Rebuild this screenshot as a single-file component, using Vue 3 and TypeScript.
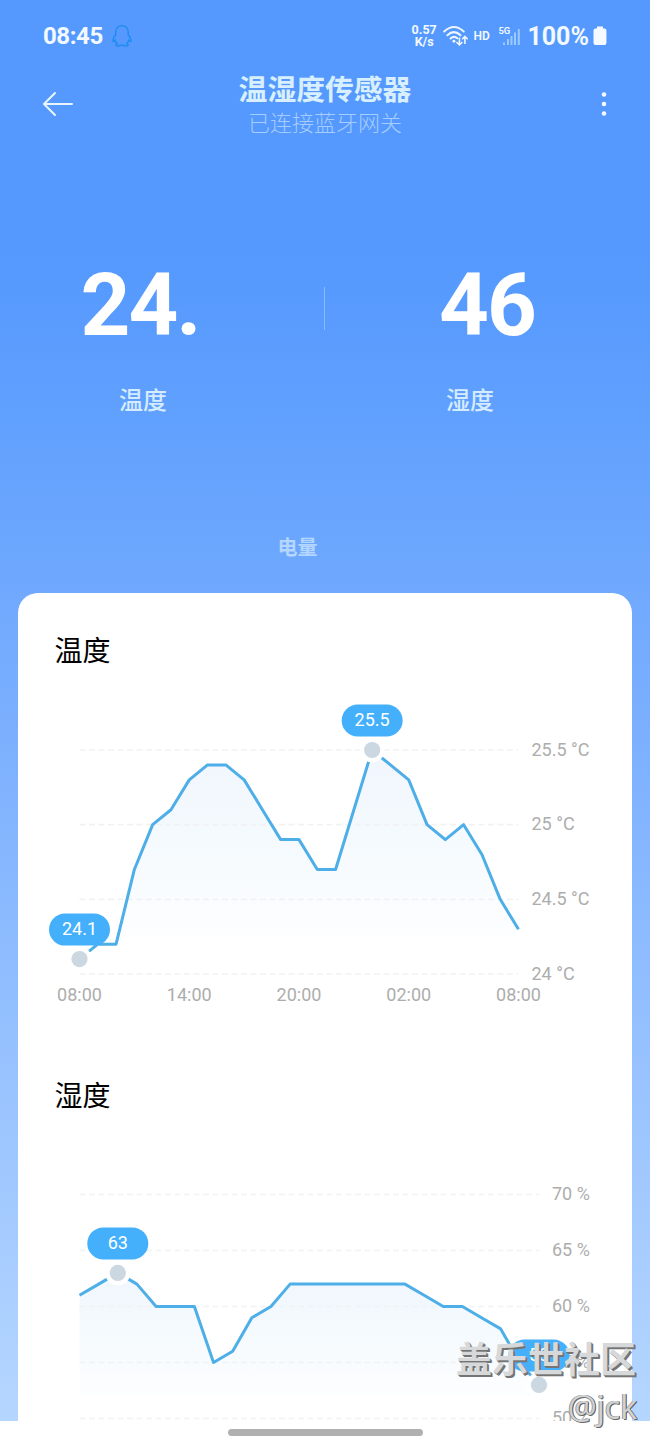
<script setup lang="ts">
interface Chart {
  id: string
  title: string
  left: number
  right: number
  top: number
  bottom: number
  max: number
  min: number
  ticks: { value: number; label: string }[]
  labelX: number
  times: string[]
  fadeEnd: number
  marks: number[]
  values: number[]
}

const charts: Chart[] = [
  {
    id: 'temperature',
    title: '温度',
    left: 61.5,
    right: 500.5,
    top: 75,
    bottom: 299,
    max: 25.5,
    min: 24,
    ticks: [
      { value: 25.5, label: '25.5 °C' },
      { value: 25, label: '25 °C' },
      { value: 24.5, label: '24.5 °C' },
      { value: 24, label: '24 °C' },
    ],
    labelX: 513.5,
    times: ['08:00', '14:00', '20:00', '02:00', '08:00'],
    fadeEnd: 262,
    marks: [0, 16],
    values: [
      24.1, 24.2, 24.2, 24.7, 25, 25.1, 25.3, 25.4, 25.4, 25.3, 25.1, 24.9, 24.9,
      24.7, 24.7, 25.1, 25.5, 25.4, 25.3, 25, 24.9, 25, 24.8, 24.5, 24.3,
    ],
  },
  {
    id: 'humidity',
    title: '湿度',
    left: 61.5,
    right: 521,
    top: 74.5,
    bottom: 298.5,
    max: 70,
    min: 50,
    ticks: [
      { value: 70, label: '70 %' },
      { value: 65, label: '65 %' },
      { value: 60, label: '60 %' },
      { value: 55, label: '55 %' },
      { value: 50, label: '50 %' },
    ],
    labelX: 534,
    times: [],
    fadeEnd: 276,
    marks: [2, 24],
    values: [
      61, 62, 63, 62, 60, 60, 60, 55, 56, 59, 60, 62, 62, 62, 62, 62, 62, 62, 61,
      60, 60, 59, 58, 55, 53,
    ],
  },
]

const px = (c: Chart, i: number) => c.left + ((c.right - c.left) * i) / (c.values.length - 1)
const py = (c: Chart, v: number) => c.top + ((c.max - v) / (c.max - c.min)) * (c.bottom - c.top)
const line = (c: Chart) =>
  c.values.map((v, i) => `${px(c, i).toFixed(2)},${py(c, v).toFixed(2)}`).join(' ')
const area = (c: Chart) => `${c.left},${c.fadeEnd} ${line(c)} ${c.right},${c.fadeEnd}`
const highest = (c: Chart) => py(c, Math.max(...c.values))
</script>

<template>
  <div class="screen">
    <div class="status">
      <span class="clock">08:45</span>
      <svg class="penguin" width="22" height="24" viewBox="0 0 22 24">
        <path
          d="M11 1.7C7 1.7 4.7 4.5 4.7 8v2.8C3.2 12.800 1.500 15 1.900 17.200c.4.8 1.400.2 2.300-1 .3 1.500.9 2.600 1.900 3.500-1.100.3-1.500 1-1.200 1.700.8 1 4.300.7 6.100-.4 1.800 1.100 5.300 1.400 6.100.4.3-.7-.1-1.400-1.200-1.700 1-.9 1.600-2 1.900-3.500.9 1.200 1.900 1.800 2.300 1 .4-2.200-1.300-4.400-2.800-6.400V8c0-3.500-2.300-6.300-6.300-6.300z"
        />
      </svg>
      <div class="speed"><span>0.57</span><span>K/s</span></div>
      <svg class="wifi" width="26" height="22" viewBox="0 0 26 22">
        <g fill="none" stroke="#eef7ff" stroke-width="2" stroke-linecap="round">
          <path d="M1.200 6.500Q11 -2.500 20.800 6.500" />
          <path d="M4.400 10.200Q11 4 17.600 10.200" />
          <path d="M7.600 13.500Q11 10.300 14.400 13.300" />
        </g>
        <circle cx="11" cy="16.300" r="1.500" fill="#eef7ff" />
        <path
          d="M16.500 12.500v7.500m-3-3l3 3 3-3M22 19v-7.500M19.200 14.300L22 11.500l2.800 2.800"
          fill="none"
          stroke="#eef7ff"
          stroke-width="1.600"
        />
      </svg>
      <span class="hd">HD</span>
      <div class="cell">
        <span class="gen">5G</span>
        <svg width="18" height="18" viewBox="0 0 18 18">
          <g fill="#9bcaff">
            <rect x="0" y="14.500" width="2" height="2.500" />
            <rect x="4" y="11" width="2" height="6" />
            <rect x="7.500" y="8" width="2" height="9" />
            <rect x="11" y="4.500" width="2" height="12.500" />
            <rect x="14.800" y="1" width="2" height="16" />
          </g>
        </svg>
      </div>
      <span class="percent">100%</span>
      <svg class="battery" width="14" height="20" viewBox="0 0 14 20">
        <path
          d="M4 .5h6v2h1.500a2 2 0 0 1 2 2v12.500a2 2 0 0 1-2 2h-9a2 2 0 0 1-2-2V4.500a2 2 0 0 1 2-2H4z"
          fill="#f4faff"
        />
      </svg>
    </div>

    <header class="header">
      <svg class="back" width="32" height="28" viewBox="0 0 32 28">
        <path d="M30 14H2M13 3L2 14l11 11" />
      </svg>
      <div class="heading">
        <h1>温湿度传感器</h1>
        <p>已连接蓝牙网关</p>
      </div>
      <svg class="more" width="8" height="28" viewBox="0 0 8 28">
        <circle cx="4" cy="4.500" r="2.300" />
        <circle cx="4" cy="14" r="2.300" />
        <circle cx="4" cy="23.500" r="2.300" />
      </svg>
    </header>

    <section class="metrics">
      <div class="metric first">
        <strong>24.</strong>
        <span>温度</span>
      </div>
      <i class="divider"></i>
      <div class="metric second">
        <strong>46</strong>
        <span>湿度</span>
      </div>
    </section>
    <div class="power">电量</div>

    <main class="card">
      <section v-for="c in charts" :key="c.id" class="panel">
        <h2>{{ c.title }}</h2>
        <svg class="chart" width="614" height="340" viewBox="0 0 614 340">
          <defs>
            <linearGradient
              :id="c.id"
              gradientUnits="userSpaceOnUse"
              x1="0"
              x2="0"
              :y1="highest(c)"
              :y2="c.fadeEnd"
            >
              <stop offset="0" stop-color="#f0f6fd" />
              <stop offset="0.500" stop-color="#f5fafe" />
              <stop offset="1" stop-color="#fdfeff" />
            </linearGradient>
          </defs>
          <polygon :points="area(c)" :fill="`url(#${c.id})`" />
          <g v-for="t in c.ticks" :key="t.label">
            <line class="grid" :x1="c.left" :x2="c.right" :y1="py(c, t.value)" :y2="py(c, t.value)" />
            <text class="axis" :x="c.labelX" :y="py(c, t.value) + 5.500">{{ t.label }}</text>
          </g>
          <polyline class="line" :points="line(c)" />
          <g v-for="m in c.marks" :key="m">
            <circle :cx="px(c, m)" :cy="py(c, c.values[m])" r="12.500" fill="#fff" />
            <circle :cx="px(c, m)" :cy="py(c, c.values[m])" r="8.100" fill="#cbd7e1" />
            <rect
              class="bubble"
              :x="px(c, m) - 30.500"
              :y="py(c, c.values[m]) - 45.500"
              width="61"
              height="32"
              rx="16"
            />
            <text class="value" :x="px(c, m)" :y="py(c, c.values[m]) - 24">
              {{ c.values[m] }}
            </text>
          </g>
          <text
            v-for="(t, i) in c.times"
            :key="i"
            class="axis time"
            :x="c.left + ((c.right - c.left) * i) / 4"
            y="326"
          >
            {{ t }}
          </text>
        </svg>
      </section>
    </main>

    <footer class="nav"><i></i></footer>

    <div class="watermark">
      <span class="community">盖乐世社区</span>
      <span class="author">@jck</span>
    </div>
  </div>
</template>

<style>
body {
  margin: 0;
}
</style>

<style scoped>
.screen {
  position: relative;
  width: 650px;
  height: 1444px;
  overflow: hidden;
  display: flex;
  flex-direction: column;
  font-family: Roboto, 'Noto Sans CJK SC', sans-serif;
  background: linear-gradient(
    #5599fe 0,
    #5599fe 255px,
    #5f9ffe 400px,
    #6ca7fe 550px,
    #79aefe 700px,
    #b5d6ff 1421px
  );
}
.status {
  display: flex;
  align-items: center;
  height: 72px;
  padding: 0 43px;
  box-sizing: border-box;
  color: #f2f9ff;
}
.clock {
  width: 60px;
  font-size: 24px;
  font-weight: 700;
  letter-spacing: -0.4px;
  white-space: nowrap;
}
.penguin {
  margin-left: 8px;
}
.penguin path {
  fill: none;
  stroke: #218cf0;
  stroke-width: 1.5;
}
.speed {
  display: flex;
  flex-direction: column;
  align-items: center;
  width: 27px;
  margin-left: 278px;
  font-size: 12.5px;
  font-weight: 700;
  line-height: 12px;
}
.wifi {
  margin-left: 5px;
}
.hd {
  width: 17px;
  margin-left: 5px;
  font-size: 12px;
  font-weight: 600;
}
.cell {
  display: flex;
  align-items: flex-end;
  height: 20px;
  width: 23px;
  margin-left: 8px;
}
.gen {
  align-self: flex-start;
  width: 12px;
  margin-right: -7px;
  font-size: 9.5px;
  line-height: 10px;
  font-weight: 600;
}
.cell svg {
  flex: none;
}
.percent {
  width: 62px;
  margin-left: 6px;
  font-size: 25px;
  font-weight: 700;
  white-space: nowrap;
}
.battery {
  margin-left: 4px;
}
.header {
  display: flex;
  align-items: center;
  justify-content: space-between;
  height: 64px;
  padding: 0 42px;
}
.back path {
  fill: none;
  stroke: #eaf6ff;
  stroke-width: 2;
  stroke-linecap: round;
}
.more {
  fill: #f2f9ff;
}
.heading {
  text-align: center;
  margin-left: -24px;
  padding-top: 4px;
}
h1,
h2,
p {
  margin: 0;
}
h1 {
  font-size: 28.8px;
  line-height: 36px;
  font-weight: 700;
  color: #d8efff;
}
p {
  font-size: 22px;
  line-height: 32px;
  font-weight: 300;
  color: #a5cdff;
}
.metrics {
  display: flex;
  align-items: flex-start;
  height: 398px;
  padding-top: 113px;
  box-sizing: border-box;
}
.metric {
  display: flex;
  flex-direction: column;
  align-items: center;
}
.metric strong {
  font-size: 87px;
  line-height: 112px;
  font-weight: 700;
  color: #fff;
  letter-spacing: -2px;
}
.metric span {
  margin-top: 23px;
  font-size: 24px;
  line-height: 34px;
  font-weight: 500;
  color: #d5ebff;
}
.metric.first {
  padding-right: 38px;
  width: 286px;
}
.metric.first strong {
  margin-left: -6px;
}
.metric.second {
  width: 290px;
}
.metric.second strong {
  margin-left: 34px;
}
.divider {
  width: 1px;
  height: 43px;
  margin-top: 38px;
  background: #86bbff;
}
.power {
  width: 595px;
  height: 59px;
  text-align: center;
  font-size: 20px;
  line-height: 28px;
  font-weight: 700;
  color: #b5d6ff;
}
.card {
  margin: 0 18px;
  height: 828px;
  overflow: hidden;
  background: #fff;
  border-radius: 20px 20px 0 0;
}
.panel {
  height: 444.5px;
  overflow: hidden;
}
h2 {
  height: 43px;
  padding: 39px 36.5px 0;
  font-size: 28px;
  line-height: 40px;
  font-weight: 400;
  color: #000;
}
.chart {
  display: block;
}
.grid {
  stroke: #f1f2f3;
  stroke-width: 1.6;
  stroke-dasharray: 6 3.5;
}
.axis {
  fill: #adadad;
  font-size: 18px;
}
.time {
  text-anchor: middle;
}
.line {
  fill: none;
  stroke: #4eaee7;
  stroke-width: 3;
  stroke-linejoin: round;
}
.bubble {
  fill: #44b0fc;
}
.value {
  fill: #fff;
  font-size: 18px;
  text-anchor: middle;
}
.nav {
  display: flex;
  justify-content: center;
  height: 23px;
  padding-top: 8px;
  box-sizing: border-box;
  background: #fff;
}
.nav i {
  width: 195px;
  height: 7px;
  border-radius: 4px;
  background: #b0b0b0;
}
.watermark {
  position: absolute;
  right: 13px;
  top: 1336px;
  display: flex;
  flex-direction: column;
  align-items: flex-end;
  white-space: nowrap;
}
.community {
  font-size: 36px;
  line-height: 50px;
  font-weight: 700;
  color: #d6d8da;
  margin-right: 1px;
  text-shadow: 1px 1px 0 #747474, 2px 2px 0 #747474;
}
.author {
  font-family: 'Open Sans', sans-serif;
  font-size: 32px;
  line-height: 42px;
  color: #d0d3d5;
  text-shadow: 1px 0 0 #666, 1px 1px 0 #666, -1px 0 0 #999;
}
</style>
